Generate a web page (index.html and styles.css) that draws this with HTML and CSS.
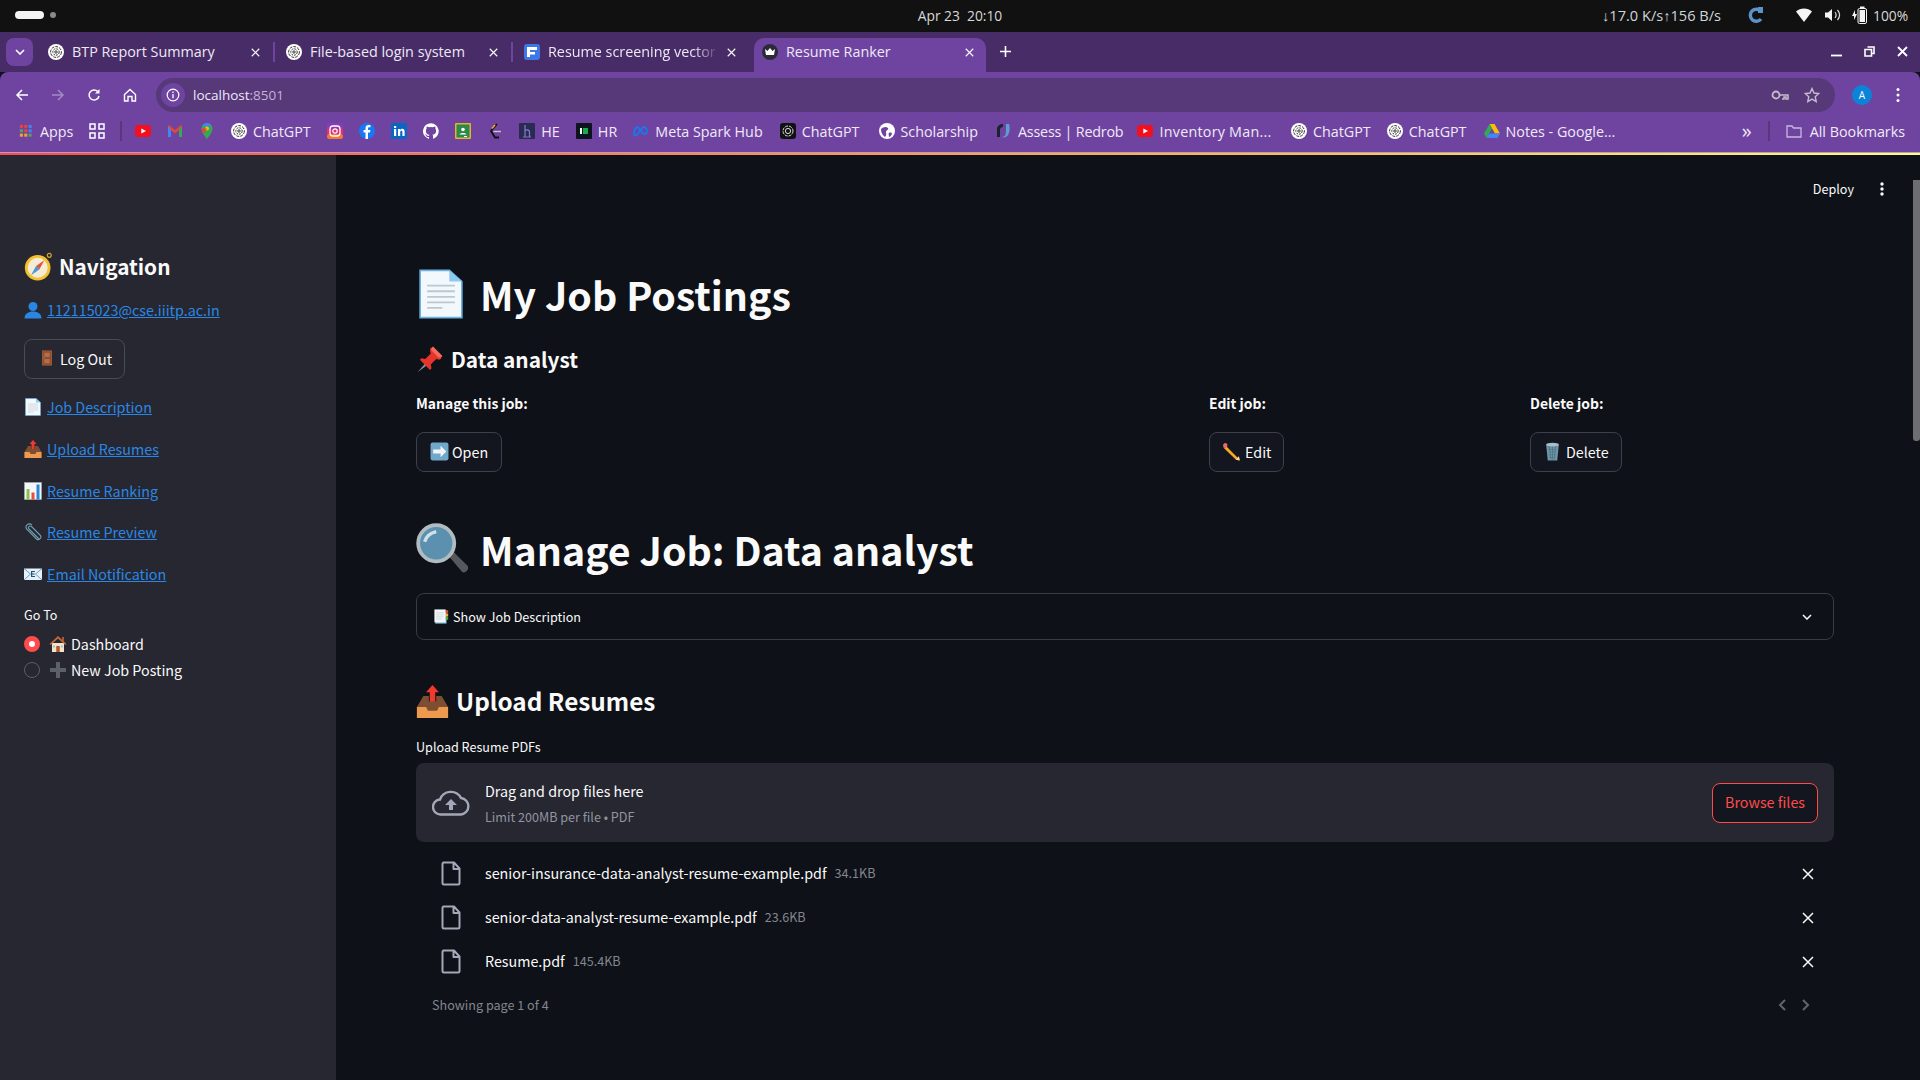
FILE: index.html
```html
<!DOCTYPE html>
<html lang="en">
<head>
  <meta charset="UTF-8" />
  <title>Resume Ranker</title>
  <link rel="stylesheet" href="styles.css">
</head>
<body>

<!-- shared icons -->
<svg class="defs" width="0" height="0">
  <symbol id="gpt" viewBox="0 0 16 16">
    <circle cx="8" cy="8" r="8" fill="#fff"/>
    <g fill="none" stroke="#333" stroke-width="1">
      <circle cx="8" cy="8" r="5.4" stroke-dasharray="3 1"/>
      <circle cx="8" cy="8" r="3.2" stroke-dasharray="2 1"/>
      <circle cx="8" cy="8" r="1.2"/>
    </g>
  </symbol>
  <symbol id="yt" viewBox="0 0 16 16">
    <rect x="0" y="2" width="16" height="12" rx="3" fill="#f40f1f"/>
    <path d="M6.3 5.4 11 8l-4.7 2.6z" fill="#fff"/>
  </symbol>
  <symbol id="e-doc" viewBox="0 0 36 36">
    <path d="M3 1h21l9 8v26H3z" fill="#f2f8fc" stroke="#6cb2e2" stroke-width="1.2"/>
    <path d="M24 1v8h9z" fill="#8ccaf0"/>
    <path d="M8 12h20M8 16h20M8 20h20M8 24h20M8 28h11" stroke="#bcc8d0" stroke-width="1.3"/>
  </symbol>
  <symbol id="e-compass" viewBox="1 0 34 35">
    <circle cx="31" cy="4" r="2.4" fill="none" stroke="#d8a52c" stroke-width="1.4"/>
    <circle cx="17" cy="19" r="15.5" fill="#f6c02d"/>
    <circle cx="17" cy="19" r="12" fill="#f5ecd8"/>
    <path d="M25 10 19 21l-4-4z" fill="#e8503f"/>
    <path d="M9 28l6-11 4 4z" fill="#4a9ad4"/>
    <circle cx="17" cy="19" r="1.3" fill="#7b8a92"/>
  </symbol>
  <symbol id="e-bust" viewBox="0 0 36 36">
    <circle cx="18" cy="11" r="9" fill="#2a86e0"/>
    <path d="M1 35c0-10 8-14 17-14s17 4 17 14z" fill="#2a86e0"/>
  </symbol>
  <symbol id="e-door" viewBox="0 0 36 36">
    <rect x="7" y="1" width="22" height="34" fill="#a4603c"/>
    <rect x="9.5" y="3" width="17" height="30" fill="#8a4a2d"/>
    <rect x="12" y="6" width="12" height="10" fill="#b46f49"/>
    <rect x="12" y="20" width="12" height="10" fill="#b46f49"/>
    <circle cx="11" cy="18" r="1" fill="#e8d9b0"/>
  </symbol>
  <symbol id="e-tray" viewBox="0 0 36 36">
    <path d="M18 0l7 8h-4v11h-6V8h-4z" fill="#ef3b2d"/>
    <path d="M8 12h6v6h8v-6h6l7 12v12H1V24z" fill="#7d4e32"/>
    <path d="M1 24h10l2 4h10l2-4h10v12H1z" fill="#ee9a4e"/>
  </symbol>
  <symbol id="e-chart" viewBox="0 0 36 36">
    <rect x="1" y="1" width="34" height="34" fill="#f4f7f8" stroke="#a9b4ba"/>
    <rect x="5" y="14" width="6" height="21" fill="#8cc152"/>
    <rect x="15" y="21" width="6" height="14" fill="#ef4b3a"/>
    <rect x="25" y="5" width="6" height="30" fill="#2b86d9"/>
  </symbol>
  <symbol id="e-clip" viewBox="0 0 36 36">
    <path d="M31 31 11 11c-3-3 1-8 5-5l17 17c5 5-2 12-7 8L7 12C1 5 10-3 17 3" fill="none" stroke="#6ea0b4" stroke-width="2.2" transform="translate(-1 1)"/>
  </symbol>
  <symbol id="e-mail" viewBox="0 0 36 36">
    <rect x="0" y="7" width="36" height="23" fill="#e6f1f8"/>
    <path d="M0 7l13 11L0 30M36 7 23 18l13 12" fill="none" stroke="#3c8cc8" stroke-width="1.6"/>
    <path d="M14 12h8v2h-5.500v3h5v2h-5v3h5.500v2h-8z" fill="#24527a"/>
  </symbol>
  <symbol id="e-house" viewBox="0 0 36 36">
    <path d="M6 16h24v18H6z" fill="#f4e3c6"/>
    <path d="M18 2 1 18l2.500 2L18 7l14.500 13 2.500-2z" fill="#c9683a"/>
    <rect x="26" y="4" width="4" height="8" fill="#a5573a"/>
    <rect x="14.500" y="22" width="7" height="12" fill="#b4562e"/>
    <rect x="8" y="21" width="4" height="4" fill="#8cc6e8"/>
    <rect x="24" y="21" width="4" height="4" fill="#8cc6e8"/>
  </symbol>
  <symbol id="e-plus" viewBox="0 0 36 36">
    <path d="M14 2h8v12h12v8H22v12h-8V22H2v-8h12z" fill="#5c6068"/>
  </symbol>
  <symbol id="e-pin" viewBox="0 0 36 36">
    <path d="M2 35 15 20l3 3z" fill="#7d939e"/>
    <path d="M19 3 33 17l-3 2-4-1-7 7 1 5-2 2L5 19l2-2 5 1 7-7-1-4z" fill="#e5352b"/>
    <path d="M22 2c-2 1-3 3-2 5l9 9c2 1 4 0 5-2z" fill="#f26a5c"/>
  </symbol>
  <symbol id="e-arrow" viewBox="0 0 36 36">
    <rect x="1" y="1" width="34" height="34" rx="4" fill="#6fa8c8"/>
    <path d="M6 14h14V7l11 11-11 11v-7H6z" fill="#f2f4f6"/>
  </symbol>
  <symbol id="e-pencil" viewBox="0 0 36 36">
    <path d="M9 9 33 33l-1 2-6-2L3 11z" fill="#f4a91e"/>
    <path d="M3 11 2 6c0-2 3-5 5-4l3 2v5l-3 2z" fill="#e66a6a"/>
    <path d="M26 33l6-6 2 8z" fill="#f2d9a6"/>
  </symbol>
  <symbol id="e-trash" viewBox="0 0 36 36">
    <path d="M6 5h24l-3 30H9z" fill="#6d97a8"/>
    <path d="M9 9 27 9M10 14h16M11 19h14M11 24h13M12 29h11M12 6l3 29M18 6v29M24 6l-3 29" stroke="#2f4450" stroke-width="1.1" stroke-dasharray="1 1"/>
    <ellipse cx="18" cy="5" rx="12" ry="3.500" fill="#a4c0cc"/>
  </symbol>
  <symbol id="e-lens" viewBox="0 0 36 36">
    <path d="M21 21l3-3 12 12c1 2-2 5-4 4z" fill="#55585c"/>
    <circle cx="14" cy="14" r="12.500" fill="#5b91ae" stroke="#b0bcc2" stroke-width="2.600"/>
    <path d="M6 13c1-4 4-6 8-7" fill="none" stroke="#cfe2ec" stroke-width="2.400"/>
  </symbol>
  <symbol id="e-tabs" viewBox="0 0 36 36">
    <rect x="3" y="3" width="27" height="32" fill="#8ec3e6"/>
    <rect x="1" y="1" width="27" height="31" fill="#f2f6f8"/>
    <path d="M5 9h18M5 14h18M5 19h18M5 24h14" stroke="#bcc8d0" stroke-width="1.500"/>
    <rect x="28" y="3" width="6" height="7" fill="#e5453a"/>
    <rect x="28" y="11" width="6" height="7" fill="#f3b42c"/>
    <rect x="28" y="19" width="6" height="7" fill="#4aa75c"/>
  </symbol>
  <symbol id="file-ic" viewBox="0 0 20 25">
    <path d="M2.500 1.500H13l5.500 6V22a1.500 1.500 0 0 1-1.500 1.500H3A1.500 1.500 0 0 1 1.500 22V3a1.500 1.500 0 0 1 1-1.500zM12.500 1.500v6.500h6" fill="none" stroke="#a3a8b8" stroke-width="2" stroke-linejoin="round"/>
  </symbol>
  <symbol id="x-ic" viewBox="0 0 12 12">
    <path d="M1 1l10 10M11 1 1 11" stroke="#fafafa" stroke-width="1.500"/>
  </symbol>
</svg>

<header class="topbar">
  <div class="workspaces"><span class="ws-pill"></span><span class="ws-dot"></span></div>
  <div class="clock">Apr 23&nbsp; 20:10</div>
  <div class="status">
    <span class="netspeed">↓17.0 K/s↑156 B/s</span>
    <svg class="st-refresh" width="16" height="18" viewBox="0 0 16 18"><path d="M13 5.500A6 6 0 1 0 13 13" fill="none" stroke="#5c93c8" stroke-width="3.400"/><path d="M10 1h5v6h-5z" fill="#5c93c8"/></svg>
    <svg class="st-wifi" width="16" height="14" viewBox="0 0 16 14"><path d="M0 3.500C4-.5 12-.5 16 3.500L8 14z" fill="#f4f4f4"/></svg>
    <svg class="st-vol" width="16" height="14" viewBox="0 0 16 14"><path d="M0 4.500h3L7 1v12L3 9.500H0z" fill="#f4f4f4"/><path d="M10 4c1.500 2 1.500 4 0 6M12.500 2c2.500 3 2.500 7 0 10" fill="none" stroke="#ddd" stroke-width="1.200"/></svg>
    <svg class="st-batt" width="15" height="18" viewBox="0 0 15 18"><path d="M3 4 0 10h2v4l3-6H3z" fill="#f4f4f4"/><rect x="6" y="2.500" width="8.500" height="15" rx="1.500" fill="none" stroke="#f4f4f4"/><rect x="7.500" y="4" width="5.500" height="12" fill="#f4f4f4"/><rect x="8" y="0.500" width="4.500" height="2" fill="#f4f4f4"/></svg>
    <span class="batt-text">100%</span>
  </div>
</header>

<div class="tabstrip">
  <button class="tab-search"><svg width="10" height="6" viewBox="0 0 10 6"><path d="M1 1l4 4 4-4" fill="none" stroke="#fff" stroke-width="1.600"/></svg></button>
  <div class="tab">
    <svg class="fav"><use href="#gpt"/></svg>
    <span class="tab-title">BTP Report Summary</span>
    <svg class="tab-x" width="9" height="9"><use href="#x-ic"/></svg>
  </div>
  <i class="tab-sep"></i>
  <div class="tab">
    <svg class="fav"><use href="#gpt"/></svg>
    <span class="tab-title">File-based login system</span>
    <svg class="tab-x" width="9" height="9"><use href="#x-ic"/></svg>
  </div>
  <i class="tab-sep"></i>
  <div class="tab">
    <svg class="fav" viewBox="0 0 16 16"><rect width="16" height="16" rx="3" fill="#3d78e6"/><path d="M3 3h10v3H6v2h5v2.500H6V13H3z" fill="#fff"/></svg>
    <span class="tab-title tab-fade">Resume screening vector</span>
    <svg class="tab-x" width="9" height="9"><use href="#x-ic"/></svg>
  </div>
  <div class="tab tab-active">
    <svg class="fav" viewBox="0 0 16 16"><circle cx="8" cy="8" r="8" fill="#2b2b38"/><path d="M3 5l2.500 2L8 4l2.500 3L13 5l-1 6H4z" fill="#fff"/></svg>
    <span class="tab-title">Resume Ranker</span>
    <svg class="tab-x" width="9" height="9"><use href="#x-ic"/></svg>
  </div>
  <svg class="tab-new" width="11" height="11" viewBox="0 0 11 11"><path d="M5.500 0v11M0 5.500h11" stroke="#fff" stroke-width="1.600"/></svg>
  <div class="win-btns">
    <svg width="11" height="11" viewBox="0 0 11 11"><path d="M0 9.500h11" stroke="#fff" stroke-width="1.800"/></svg>
    <svg width="11" height="11" viewBox="0 0 11 11"><path d="M3.500 1h6.500v6.500H8M1 3.500h6.500V10H1z" fill="none" stroke="#fff" stroke-width="1.600"/></svg>
    <svg width="11" height="11" viewBox="0 0 11 11"><path d="M1 1l9 9M10 1l-9 9" stroke="#fff" stroke-width="1.800"/></svg>
  </div>
</div>

<div class="chrome-panel">
  <div class="toolbar">
    <div class="nav-btns">
      <svg width="14" height="14" viewBox="0 0 14 14"><path d="M13 7H2M7 2 2 7l5 5" fill="none" stroke="#fff" stroke-width="1.500"/></svg>
      <svg width="14" height="14" viewBox="0 0 14 14"><path d="M1 7h11M7 2l5 5-5 5" fill="none" stroke="#a28ac2" stroke-width="1.500"/></svg>
      <svg width="14" height="14" viewBox="0 0 14 14"><path d="M12 8a5 5 0 1 1-1.300-4.500" fill="none" stroke="#fff" stroke-width="1.500"/><path d="M12.500 1v4.500H8z" fill="#fff"/></svg>
      <svg width="14" height="14" viewBox="0 0 14 14"><path d="M1.500 6.500 7 1.500l5.500 5V13H9V8.500H5V13H1.500z" fill="none" stroke="#fff" stroke-width="1.400"/></svg>
    </div>
    <div class="omnibox">
      <span class="site-info"><svg width="14" height="14" viewBox="0 0 14 14"><circle cx="7" cy="7" r="5.800" fill="none" stroke="#fff" stroke-width="1.200"/><path d="M7 6v4.200M7 3.600v1.300" stroke="#fff" stroke-width="1.300"/></svg></span>
      <span class="url">localhost<span class="url-port">:8501</span></span>
      <svg class="omni-key" width="18" height="12" viewBox="0 0 18 12"><circle cx="5" cy="6" r="3.500" fill="none" stroke="#c4bccd" stroke-width="1.800"/><path d="M9 6h8v4h-2V8h-2v2h-2" fill="none" stroke="#c4bccd" stroke-width="1.500"/></svg>
      <svg class="omni-star" width="16" height="16" viewBox="0 0 16 16"><path d="M8 1.500l2 4.500 4.800.5-3.600 3.200 1 4.800L8 12.100l-4.200 2.400 1-4.800L1.200 6.500 6 6z" fill="none" stroke="#c4bccd" stroke-width="1.400"/></svg>
    </div>
    <div class="tool-right">
      <span class="avatar">A</span>
      <svg width="4" height="16" viewBox="0 0 4 16"><circle cx="2" cy="2.500" r="1.500" fill="#fff"/><circle cx="2" cy="8" r="1.500" fill="#fff"/><circle cx="2" cy="13.500" r="1.500" fill="#fff"/></svg>
    </div>
  </div>

  <nav class="bookmarks">
    <a class="bm bm-apps">
      <svg class="fav-apps" viewBox="0 0 16 16">
        <g fill="#e5453a"><rect x="1" y="1" width="3.500" height="3.500"/><rect x="6" y="1" width="3.500" height="3.500"/></g><rect x="11" y="1" width="3.500" height="3.500" fill="#4285f4"/>
        <g fill="#4aa75c"><rect x="1" y="6" width="3.500" height="3.500"/></g><rect x="6" y="6" width="3.500" height="3.500" fill="#e5453a"/><rect x="11" y="6" width="3.500" height="3.500" fill="#4285f4"/>
        <g fill="#f3a02c"><rect x="1" y="11" width="3.500" height="3.500"/><rect x="6" y="11" width="3.500" height="3.500"/></g><rect x="11" y="11" width="3.500" height="3.500" fill="#4aa75c"/>
      </svg>Apps</a>
    <svg class="fav bm-grid" viewBox="0 0 16 16"><g fill="none" stroke="#fff" stroke-width="1.500"><rect x="1" y="1" width="5" height="5"/><rect x="10" y="1" width="5" height="5"/><rect x="1" y="10" width="5" height="5"/><rect x="10" y="10" width="5" height="5"/></g></svg>
    <i class="bm-sep bm-sep-first"></i>
    <svg class="fav"><use href="#yt"/></svg>
    <svg class="fav" viewBox="0 0 16 16"><path d="M1 3v11h3V7l4 3.500L12 7v7h3V3l-1-1-6 5-6-5z" fill="#e5453a"/><path d="M1 3v11h3V7z" fill="#4285f4"/><path d="M15 3v11h-3V7z" fill="#34a853"/></svg>
    <svg class="fav" viewBox="0 0 16 16"><path d="M8 0a5.500 5.500 0 0 0-5.500 5.500C2.500 10 8 16 8 16s5.500-6 5.500-10.500A5.500 5.500 0 0 0 8 0z" fill="#34a853"/><path d="M8 0a5.500 5.500 0 0 0-4 1.800L8 5.500l4-3.700A5.500 5.500 0 0 0 8 0z" fill="#4285f4"/><circle cx="8" cy="5.500" r="2" fill="#fbbc04"/><path d="M2.500 5.500c0 2 1 4 2 5.500L8 5.500z" fill="#e5453a"/></svg>
    <a class="bm"><svg class="fav"><use href="#gpt"/></svg>ChatGPT</a>
    <svg class="fav" viewBox="0 0 16 16"><rect width="16" height="16" rx="4" fill="#e1306c"/><rect width="16" height="6" rx="3" fill="#8a3ab9"/><rect y="11" width="16" height="5" rx="2.500" fill="#f77737"/><rect x="3" y="3" width="10" height="10" rx="3" fill="none" stroke="#fff" stroke-width="1.300"/><circle cx="8" cy="8" r="2.200" fill="none" stroke="#fff" stroke-width="1.200"/></svg>
    <svg class="fav" viewBox="0 0 16 16"><circle cx="8" cy="8" r="8" fill="#1877f2"/><path d="M9 16V9.500h2l.4-2.500H9V5.500c0-.8.300-1.200 1.300-1.200h1.200V2.200C11 2.100 10.300 2 9.700 2 7.800 2 6.500 3.100 6.500 5.200V7H4.500v2.500h2V16z" fill="#fff"/></svg>
    <svg class="fav" viewBox="0 0 16 16"><rect width="16" height="16" rx="2" fill="#0a66c2"/><path d="M3 6h2.200v7H3zM3 3h2.200v2H3zM7 6h2.100v1c.5-.7 1.200-1.200 2.200-1.200 1.700 0 2.300 1.100 2.300 2.900V13h-2.200V9.100c0-.9-.3-1.400-1-1.400-.8 0-1.200.6-1.200 1.500V13H7z" fill="#fff"/></svg>
    <svg class="fav" viewBox="0 0 16 16"><path d="M8 .2a8 8 0 0 0-2.500 15.600c.4.100.5-.2.500-.4v-1.400c-2.200.5-2.700-1-2.700-1-.4-.9-.9-1.200-.9-1.200-.7-.5.100-.5.100-.5.800.1 1.200.8 1.200.8.700 1.200 1.900.9 2.300.7.100-.5.300-.9.500-1.100-1.800-.2-3.600-.9-3.600-4 0-.9.300-1.600.8-2.100-.1-.2-.4-1 .1-2.100 0 0 .7-.2 2.200.8a7.600 7.600 0 0 1 4 0c1.500-1 2.200-.8 2.200-.8.400 1.100.2 1.900.1 2.100.5.600.8 1.300.8 2.100 0 3.100-1.900 3.700-3.700 3.900.3.300.6.800.6 1.500v2.200c0 .2.100.5.500.4A8 8 0 0 0 8 .2z" fill="#fff"/></svg>
    <svg class="fav" viewBox="0 0 16 16"><rect width="16" height="16" rx="1" fill="#e7b32c"/><rect x="1.500" y="1.500" width="13" height="13" fill="#2a8a4a"/><circle cx="8" cy="6.500" r="1.800" fill="#fff"/><path d="M4.500 11.500c.5-2 6.500-2 7 0zM9 13h3v1H9z" fill="#fff"/></svg>
    <svg class="fav" viewBox="0 0 16 16"><path d="M10 1 4 8l4 6.500h4" fill="none" stroke="#111" stroke-width="1.800"/><path d="M6.500 8.500H14" stroke="#c8c8c8" stroke-width="1.400"/><path d="M5 5.500l3-3.500" stroke="#f0a02c" stroke-width="1.800"/></svg>
    <a class="bm"><svg class="fav" viewBox="0 0 16 16"><rect width="16" height="16" rx="1" fill="#2a2a52"/><path d="M6 2v12M6 8c1-1.500 4.500-1.500 4.500 1v5" fill="none" stroke="#7c78c2" stroke-width="1.300"/><path d="M4 14h8" stroke="#7c78c2"/></svg>HE</a>
    <a class="bm"><svg class="fav" viewBox="0 0 16 16"><rect width="16" height="16" rx="1" fill="#0e141e"/><rect x="4" y="5" width="2" height="6" fill="#fff"/><rect x="7" y="5" width="5" height="6" fill="#1ba94c"/></svg>HR</a>
    <a class="bm bm-meta"><svg class="fav" viewBox="0 0 16 16"><path d="M1 11c0-4 2-7 3.500-7S9 11 11 11s3-1 3-3-1.500-4-3-4-4 4-5.500 6-4.500 4-4.500 1z" fill="none" stroke="#1877f2" stroke-width="1.800"/></svg>Meta Spark Hub</a>
    <a class="bm bm-gpt2"><svg class="fav" viewBox="0 0 16 16"><rect width="16" height="16" rx="3" fill="#111"/><g fill="none" stroke="#ddd"><circle cx="8" cy="8" r="5" stroke-dasharray="3 1"/><circle cx="8" cy="8" r="2.600"/></g></svg>ChatGPT</a>
    <a class="bm bm-scholar"><svg class="fav" viewBox="0 0 16 16"><circle cx="8" cy="8" r="8" fill="#fff"/><path d="M2 6c2-2 5-3 7-1 1 2-2 2-2 4s1 3-1 5C3 12 2 9 2 6zM10 10c2-1 3 0 3 1-1 2-2 3-3 3 0-2-1-3 0-4z" fill="#6f44a1"/></svg>Scholarship</a>
    <a class="bm bm-assess"><svg class="fav" viewBox="0 0 16 16"><path d="M1 14V6c0-3 3-5 6-5v3C5 4 4 5 4 7v7z" fill="#1a2230"/><path d="M10 1h3c1 3 1 8-1 11-1 2-4 3-6 2 3 0 4-3 4-6z" fill="#5f9cd2"/></svg>Assess | Redrob</a>
    <a class="bm bm-inv"><svg class="fav"><use href="#yt"/></svg>Inventory Man...</a>
    <a class="bm bm-gpt3"><svg class="fav"><use href="#gpt"/></svg>ChatGPT</a>
    <a class="bm"><svg class="fav"><use href="#gpt"/></svg>ChatGPT</a>
    <a class="bm bm-notes"><svg class="fav" viewBox="0 0 16 16"><path d="M5.500 1h5L16 10.500h-5z" fill="#fbbc04"/><path d="M5.500 1 0 10.500 2.500 15 8 5.500z" fill="#34a853"/><path d="M2.500 15h11l2.500-4.500H5z" fill="#4285f4"/></svg>Notes - Google...</a>
    <div class="bm-end">
      <span class="bm-more">»</span>
      <i class="bm-sep"></i>
      <a class="bm bm-all"><svg class="fav" viewBox="0 0 16 16"><path d="M1 3h5l1.500 2H15v9H1z" fill="none" stroke="#c9b8dd" stroke-width="1.300"/></svg>All Bookmarks</a>
    </div>
  </nav>
</div>
<div class="rainbow"></div>

<div class="app">
  <aside class="sidebar">
    <h2 class="side-title"><svg class="em em-27"><use href="#e-compass"/></svg>Navigation</h2>
    <p class="side-user"><svg class="em em-18"><use href="#e-bust"/></svg><a href="#">112115023@cse.iiitp.ac.in</a></p>
    <button class="btn btn-side"><svg class="em em-16"><use href="#e-door"/></svg>Log Out</button>
    <a class="side-link first" href="#"><svg class="em em-18"><use href="#e-doc"/></svg><span>Job Description</span></a>
    <a class="side-link" href="#"><svg class="em em-18"><use href="#e-tray"/></svg><span>Upload Resumes</span></a>
    <a class="side-link" href="#"><svg class="em em-18"><use href="#e-chart"/></svg><span>Resume Ranking</span></a>
    <a class="side-link side-link-tight" href="#"><svg class="em em-18"><use href="#e-clip"/></svg><span>Resume Preview</span></a>
    <a class="side-link" href="#"><svg class="em em-18"><use href="#e-mail"/></svg><span>Email Notification</span></a>
    <div class="goto">Go To</div>
    <div class="radio radio-on"><i class="radio-dot"></i><svg class="em em-18"><use href="#e-house"/></svg>Dashboard</div>
    <div class="radio"><i class="radio-dot"></i><svg class="em em-18"><use href="#e-plus"/></svg>New Job Posting</div>
  </aside>

  <main class="main">
    <div class="app-head">
      <span class="deploy">Deploy</span>
      <svg width="4" height="14" viewBox="0 0 4 14"><circle cx="2" cy="2" r="1.700" fill="#fafafa"/><circle cx="2" cy="7" r="1.700" fill="#fafafa"/><circle cx="2" cy="12" r="1.700" fill="#fafafa"/></svg>
    </div>

    <h1 class="h1"><svg class="em em-50"><use href="#e-doc"/></svg>My Job Postings</h1>
    <h3 class="h3"><svg class="em em-28"><use href="#e-pin"/></svg>Data analyst</h3>

    <div class="job-cols">
      <div>
        <div class="col-label">Manage this job:</div>
        <button class="btn"><svg class="em em-19"><use href="#e-arrow"/></svg>Open</button>
      </div>
      <div>
        <div class="col-label">Edit job:</div>
        <button class="btn btn-tight"><svg class="em em-19"><use href="#e-pencil"/></svg>Edit</button>
      </div>
      <div>
        <div class="col-label">Delete job:</div>
        <button class="btn btn-tight"><svg class="em em-19"><use href="#e-trash"/></svg>Delete</button>
      </div>
    </div>

    <h1 class="h1 h1-manage"><svg class="em em-52"><use href="#e-lens"/></svg>Manage Job: Data analyst</h1>

    <div class="expander">
      <svg class="em em-15"><use href="#e-tabs"/></svg>
      <span>Show Job Description</span>
      <svg class="chev" width="10" height="6" viewBox="0 0 10 6"><path d="M1 1l4 4 4-4" fill="none" stroke="#fafafa" stroke-width="1.500"/></svg>
    </div>

    <h2 class="h2"><svg class="em em-33"><use href="#e-tray"/></svg>Upload Resumes</h2>
    <div class="up-label">Upload Resume PDFs</div>

    <section class="dropzone">
      <svg class="cloud" width="38" height="26" viewBox="0 0 38 26">
        <path d="M9 24.500a7.500 7.500 0 0 1-1-15A11.500 11.500 0 0 1 29 8a8.300 8.300 0 0 1 0 16.500z" fill="none" stroke="#a3a8b8" stroke-width="2.400"/>
        <path d="M19 9l-6 6h4v5h4v-5h4z" fill="#a3a8b8"/>
      </svg>
      <div class="dz-text">
        <div class="dz-title">Drag and drop files here</div>
        <div class="dz-limit">Limit 200MB per file • PDF</div>
      </div>
      <button class="btn btn-browse">Browse files</button>
    </section>

    <ul class="files">
      <li class="file">
        <svg class="file-ic" width="20" height="25"><use href="#file-ic"/></svg>
        <span class="file-name">senior-insurance-data-analyst-resume-example.pdf</span>
        <span class="file-size">34.1KB</span>
        <svg class="file-x" width="12" height="12"><use href="#x-ic"/></svg>
      </li>
      <li class="file">
        <svg class="file-ic" width="20" height="25"><use href="#file-ic"/></svg>
        <span class="file-name">senior-data-analyst-resume-example.pdf</span>
        <span class="file-size">23.6KB</span>
        <svg class="file-x" width="12" height="12"><use href="#x-ic"/></svg>
      </li>
      <li class="file">
        <svg class="file-ic" width="20" height="25"><use href="#file-ic"/></svg>
        <span class="file-name">Resume.pdf</span>
        <span class="file-size">145.4KB</span>
        <svg class="file-x" width="12" height="12"><use href="#x-ic"/></svg>
      </li>
    </ul>

    <div class="pager">
      <span>Showing page 1 of 4</span>
      <div class="pager-btns">
        <svg width="8" height="12" viewBox="0 0 8 12"><path d="M7 1 2 6l5 5" fill="none" stroke="#62646b" stroke-width="2"/></svg>
        <svg width="8" height="12" viewBox="0 0 8 12"><path d="M1 1l5 5-5 5" fill="none" stroke="#62646b" stroke-width="2"/></svg>
      </div>
    </div>
  </main>

  <div class="scrollbar"><div class="scroll-thumb"></div></div>
</div>

</body>
</html>
```

FILE: styles.css
```css
* {
  box-sizing: border-box;
}

body {
  margin: 0;
  width: 1920px;
  height: 1080px;
  overflow: hidden;
  background: #0e1117;
  color: #fafafa;
  font-family: "Noto Sans CJK JP", "Noto Sans", sans-serif;
  font-size: 14.300px;
}

.defs {
  position: absolute;
}

h1, h2, h3, p, ul {
  margin: 0;
  padding: 0;
}

button {
  font-family: inherit;
}

/* system bar */
.topbar {
  height: 32px;
  padding-bottom: 2px;
  background: #111;
  display: flex;
  align-items: center;
  position: relative;
  font-family: "Open Sans", sans-serif;
  font-size: 13.800px;
  color: #d8d8d8;
}

.workspaces {
  display: flex;
  align-items: center;
  gap: 6px;
  padding-left: 15px;
}

.ws-pill {
  width: 29px;
  height: 8px;
  border-radius: 4px;
  background: #f4f4f4;
}

.ws-dot {
  width: 6px;
  height: 6px;
  border-radius: 50%;
  background: #8a8a8a;
}

.clock {
  position: absolute;
  left: 905px;
  width: 110px;
  text-align: center;
}

.status {
  margin-left: auto;
  display: flex;
  align-items: center;
  padding-right: 12px;
}

.netspeed {
  width: 118px;
  margin-right: 28px;
  font-size: 14.600px;
  white-space: nowrap;
  color: #cfd6dc;
}

.st-refresh {
  margin-right: 32px;
}

.st-wifi {
  margin-right: 13px;
}

.st-vol {
  margin-right: 11px;
}

.batt-text {
  margin-left: 6px;
  width: 35px;
  white-space: nowrap;
}

/* tab strip */
.tabstrip {
  height: 40px;
  background: #472c67;
  display: flex;
  align-items: flex-end;
  font-family: "Open Sans", sans-serif;
  font-size: 14.350px;
  color: #eee8f5;
}

.tab-search {
  width: 27px;
  height: 28px;
  margin: 0 7px 6px 6px;
  border: none;
  border-radius: 8px;
  background: #6f44a1;
  display: flex;
  align-items: center;
  justify-content: center;
}

.tab {
  width: 236px;
  height: 34px;
  padding: 0 14px 6px 8px;
  display: flex;
  align-items: center;
  gap: 8px;
  flex: none;
}

.fav {
  width: 16px;
  height: 16px;
  flex: none;
}

.fav-apps {
  width: 14px;
  height: 16px;
  flex: none;
}

.tab-title {
  flex: 1;
  padding-bottom: 2px;
  white-space: nowrap;
  overflow: hidden;
}

.tab-fade {
  -webkit-mask-image: linear-gradient(90deg, #000 85%, transparent);
  mask-image: linear-gradient(90deg, #000 85%, transparent);
}

.tab-x {
  flex: none;
  margin-right: 2px;
}

.tab-sep {
  width: 2px;
  height: 20px;
  margin: 0 3px 10px -3px;
  background: #6f44a1;
  flex: none;
}

.tab-active {
  width: 232px;
  margin-left: 2px;
  padding-right: 10px;
  background: #6f44a1;
  border-radius: 10px 10px 0 0;
}

.tab-new {
  margin: 0 0 15px 14px;
}

.win-btns {
  margin-left: auto;
  display: flex;
  gap: 22px;
  padding: 0 12px 15px 0;
}

/* toolbar + bookmarks */
.chrome-panel {
  background: #6f44a1;
  border-radius: 8px 8px 0 0;
  height: 80px;
  font-family: "Open Sans", sans-serif;
  color: #f0eaf6;
}

.toolbar {
  height: 40px;
  padding: 6px 0 0 15px;
  display: flex;
  align-items: flex-start;
}

.nav-btns {
  width: 141px;
  height: 34px;
  display: flex;
  align-items: center;
  gap: 22px;
}

.omnibox {
  width: 1679px;
  height: 34px;
  border-radius: 17px;
  background: #573879;
  display: flex;
  align-items: center;
  padding-left: 5px;
  font-size: 13.500px;
}

.site-info {
  width: 24px;
  height: 24px;
  border-radius: 50%;
  background: #6f44a1;
  display: flex;
  align-items: center;
  justify-content: center;
  margin-right: 8px;
}

.url-port {
  color: #c3b5d4;
}

.omni-key {
  margin-left: auto;
  margin-right: 15px;
}

.omni-star {
  margin-right: 15px;
}

.tool-right {
  height: 34px;
  display: flex;
  align-items: center;
  padding-left: 17px;
  gap: 24px;
}

.avatar {
  width: 20px;
  height: 20px;
  border-radius: 50%;
  background: #0b84d8;
  font-size: 10px;
  color: #fff;
  display: flex;
  align-items: center;
  justify-content: center;
}

.bookmarks {
  height: 40px;
  padding: 0 0 2px 19px;
  display: flex;
  align-items: center;
  gap: 16.100px;
  font-size: 14.300px;
  white-space: nowrap;
}

.bm {
  display: flex;
  align-items: center;
  gap: 6px;
  color: #f0eaf6;
}

.bm-apps {
  gap: 7px;
}

.bm-gpt2 { margin-left: 1px; }
.bm-scholar { margin-left: 3px; }
.bm-assess { margin-left: 2px; letter-spacing: -0.200px; }
.bm-inv { margin-left: -2px; letter-spacing: 0.250px; }
.bm-gpt3 { margin-left: 3.500px; }
.bm-notes { margin-left: 1px; }

.bm-sep {
  width: 2px;
  height: 20px;
  background: #573879;
  flex: none;
}

.bm-sep-first {
  margin: 0 -3px 0 -2px;
}

.bm-end {
  margin-left: auto;
  padding-right: 15px;
  display: flex;
  align-items: center;
  gap: 16px;
}

.bm-all {
  gap: 8px;
}

.bm-more {
  font-size: 20px;
  line-height: 1;
}

.rainbow {
  height: 3px;
  border-top: 1px solid #b49ccf;
  background: linear-gradient(90deg, #ff4b4b, #ffc34b 70%, #fffd80);
}

/* streamlit app */
.app {
  display: flex;
  height: 925px;
  overflow: hidden;
}

.sidebar {
  width: 336px;
  flex: none;
  background: #262730;
  padding: 94px 0 0 24px;
}

.em {
  flex: none;
  display: inline-block;
}

.em-15 { width: 15px; height: 15px; }
.em-16 { width: 16px; height: 20px; }
.em-18 { width: 18px; height: 18px; }
.em-19 { width: 19px; height: 19px; }
.em-27 { width: 29px; height: 29px; }
.em-28 { width: 28px; height: 28px; }
.em-33 { width: 33px; height: 33px; }
.em-50 { width: 50px; height: 50px; }
.em-52 { width: 52px; height: 52px; }

.side-title {
  height: 36px;
  padding-bottom: 2px;
  display: flex;
  align-items: center;
  gap: 6px;
  font-size: 20.800px;
  line-height: 34px;
  font-weight: 600;
}

.side-user {
  height: 24px;
  margin-top: 13px;
  display: flex;
  align-items: center;
  gap: 5px;
  line-height: 24px;
}

a {
  color: #2b87e6;
}

.btn {
  height: 40px;
  padding: 0 13px 2px;
  display: inline-flex;
  align-items: center;
  gap: 3px;
  background: #13161e;
  color: #fafafa;
  border: 1px solid #3d3f49;
  border-radius: 8px;
  font-size: 14.300px;
}

.btn-side {
  margin-top: 17px;
  padding: 0 12px 2px 14px;
  gap: 5px;
  background: #262730;
  border-color: #494b55;
}

.btn-tight {
  padding: 0 12px 2px;
  gap: 4px;
}

.side-link {
  display: flex;
  align-items: center;
  width: fit-content;
  gap: 5px;
  height: 24px;
  margin-top: 18px;
  line-height: 24px;
  text-decoration: underline;
}

.side-link.first {
  margin-top: 16px;
}

.side-link.side-link-tight {
  margin-top: 17px;
}

.goto {
  margin-top: 19px;
  font-size: 12.600px;
  line-height: 20px;
}

.radio {
  margin-top: 2px;
  height: 24px;
  display: flex;
  align-items: center;
  gap: 4px;
  line-height: 24px;
}

.radio-on {
  margin-top: 7px;
}

.radio-dot {
  width: 16px;
  height: 16px;
  margin-right: 5px;
  border-radius: 50%;
  border: 1px solid #5d5f68;
  background: #262730;
}

.radio-on .radio-dot {
  border: 5px solid #ff4b4b;
  background: #fff;
}

.main {
  flex: 1;
  min-width: 0;
  padding: 0 86px 0 80px;
}

.app-head {
  height: 68px;
  padding-bottom: 1px;
  display: flex;
  align-items: center;
  justify-content: flex-end;
  gap: 26px;
  margin-right: -50px;
  font-size: 12.600px;
}

.h1 {
  margin-top: 40px;
  height: 64px;
  padding-bottom: 2px;
  display: flex;
  align-items: center;
  gap: 14px;
  font-size: 39.300px;
  line-height: 62px;
  font-weight: 700;
}

.h1-manage {
  margin-top: 46px;
  gap: 12px;
}

.h3 {
  margin-top: 15px;
  height: 36px;
  padding-bottom: 2px;
  display: flex;
  align-items: center;
  gap: 7px;
  font-size: 20.800px;
  line-height: 34px;
  font-weight: 600;
}

.job-cols {
  margin-top: 13px;
  display: grid;
  grid-template-columns: 793px 321px 1fr;
}

.col-label {
  height: 24px;
  margin-bottom: 17px;
  line-height: 24px;
  font-size: 13.900px;
  font-weight: 600;
}

.expander {
  margin-top: 11px;
  height: 47px;
  padding: 0 21px 0 17px;
  display: flex;
  align-items: center;
  gap: 4px;
  border: 1px solid #3a3c44;
  border-radius: 8px;
  font-size: 12.600px;
}

.chev {
  margin-left: auto;
}

.h2 {
  margin-top: 39px;
  height: 44px;
  display: flex;
  align-items: center;
  gap: 7px;
  font-size: 24.300px;
  line-height: 44px;
  font-weight: 600;
}

.up-label {
  margin-top: 14px;
  font-size: 12.600px;
  line-height: 20px;
}

.dropzone {
  margin-top: 6px;
  height: 79px;
  padding: 0 16px;
  display: flex;
  align-items: center;
  background: #262730;
  border-radius: 8px;
}

.cloud {
  flex: none;
  margin-right: 15px;
}

.dz-title {
  line-height: 24px;
}

.dz-limit {
  margin-top: 4px;
  font-size: 12.600px;
  line-height: 20px;
  color: #9294a0;
}

.btn-browse {
  margin-left: auto;
  padding: 0 12px 2px;
  border-color: #ff4b4b;
  color: #ff4b4b;
}

.files {
  margin-top: 9px;
  list-style: none;
}

.file {
  height: 44px;
  padding: 0 20px 0 25px;
  display: flex;
  align-items: center;
}

.file-ic {
  flex: none;
  margin-right: 24px;
}

.file-name,
.file-size {
  padding-bottom: 2px;
}

.file-size {
  margin-left: 8px;
  font-size: 12.600px;
  color: #84868f;
}

.file-x {
  margin: 1px 0 0 auto;
}

.pager {
  margin-top: 12px;
  height: 20px;
  padding: 0 24px 1px 16px;
  display: flex;
  align-items: center;
  justify-content: space-between;
  font-size: 12.600px;
  color: #84868f;
}

.pager-btns {
  display: flex;
  gap: 16px;
}

/* scrollbar sits over the page edge */
.scrollbar {
  position: absolute;
  top: 180px;
  right: 0;
  width: 7px;
  height: 261px;
}

.scroll-thumb {
  height: 100%;
  background: #6d6e72;
  border-radius: 0 0 3px 3px;
}
```
